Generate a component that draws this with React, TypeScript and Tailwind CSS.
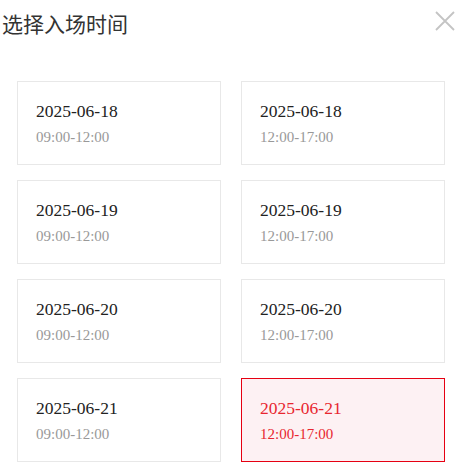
import React from "react";

const slots = [
  { date: "2025-06-18", time: "09:00-12:00" },
  { date: "2025-06-18", time: "12:00-17:00" },
  { date: "2025-06-19", time: "09:00-12:00" },
  { date: "2025-06-19", time: "12:00-17:00" },
  { date: "2025-06-20", time: "09:00-12:00" },
  { date: "2025-06-20", time: "12:00-17:00" },
  { date: "2025-06-21", time: "09:00-12:00" },
  { date: "2025-06-21", time: "12:00-17:00", active: true },
];

export default function App() {
  return (
    <div className="w-[465px] h-[474px] bg-white overflow-hidden">
      <div className="flex items-start justify-between pl-[2px] pr-[10px] pt-[8px] h-[81px]">
        <div
          className="text-[21px] leading-[30px] text-[#333333]"
          style={{ fontFamily: '"Noto Sans CJK SC", "Noto Sans", sans-serif' }}
        >
          选择入场时间
        </div>
        <svg width="20" height="20" viewBox="0 0 20 20" className="mt-[3px]">
          <path d="M1 1 L19 19 M19 1 L1 19" stroke="#c4c4c4" strokeWidth="1.8" fill="none" />
        </svg>
      </div>
      <div className="grid grid-cols-2 gap-x-5 gap-y-[15px] pl-[17px] pr-[20px]">
        {slots.map((s, i) => (
          <div
            key={i}
            className={
              s.active
                ? "h-[84px] border border-[#e60012] bg-[#fdf1f3] pl-[18px] pt-[16px] flex flex-col gap-[2px]"
                : "h-[84px] border border-[#e8e8e8] bg-white pl-[18px] pt-[16px] flex flex-col gap-[2px]"
            }
            style={{ fontFamily: '"Liberation Serif", "Times New Roman", serif' }}
          >
            <div
              className={
                s.active
                  ? "text-[17.5px] leading-[26px] text-[#e8262f]"
                  : "text-[17.5px] leading-[26px] text-[#222222]"
              }
            >
              {s.date}
            </div>
            <div
              className={
                s.active
                  ? "text-[15px] leading-[22px] text-[#e8262f]"
                  : "text-[15px] leading-[22px] text-[#999999]"
              }
            >
              {s.time}
            </div>
          </div>
        ))}
      </div>
    </div>
  );
}
